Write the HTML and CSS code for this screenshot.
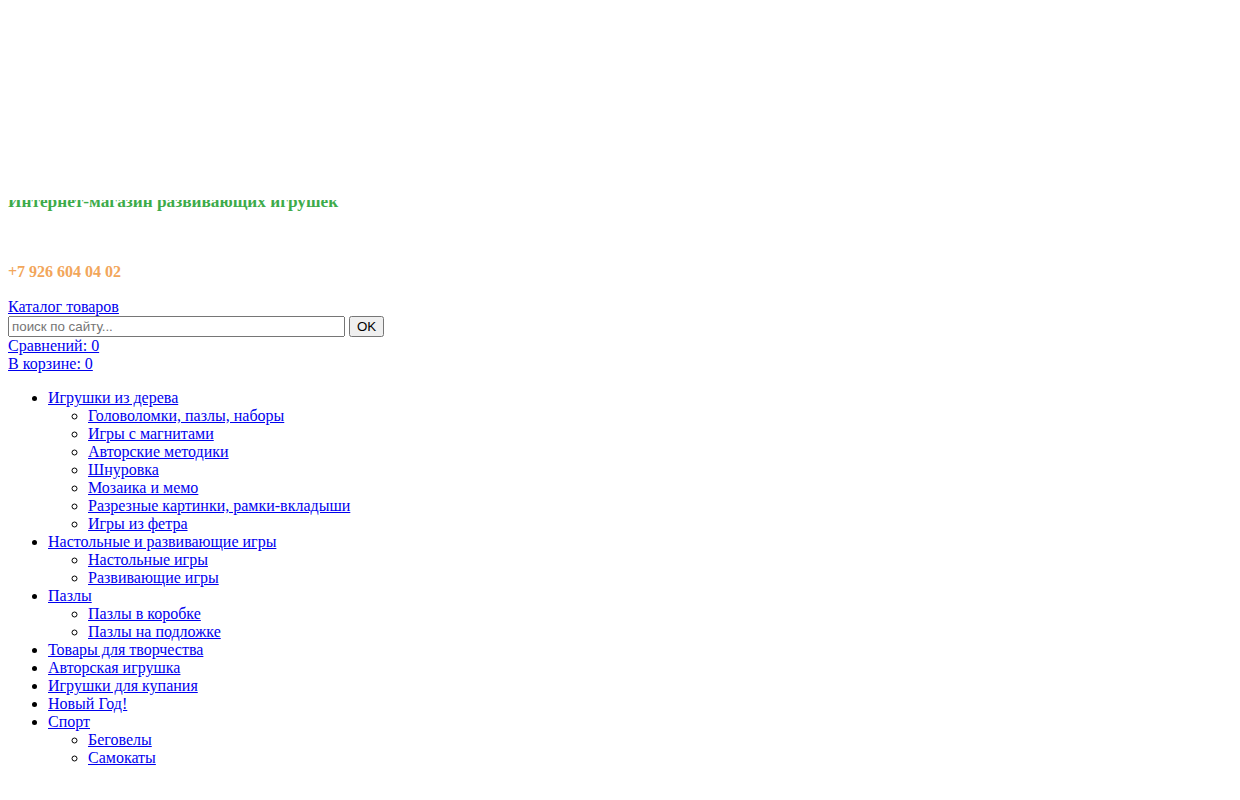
FILE: index.html
```html
<!DOCTYPE html>
<html lang="ru">
<head>
  <meta charset="UTF-8">
  <title>Интернет-магазин развивающих игрушек</title>
  <link rel="stylesheet" href="styles.css">
</head>
<body>

  <header class="header">
    <div class="logo"></div>
    <div class="slogan-clip">
      <div class="slogan">Интернет-магазин развивающих игрушек</div>
    </div>
    <div class="phone">+7 926 604 04 02</div>
  </header>

  <div class="toolbar">
    <a href="#" class="catalog-link">Каталог товаров</a>
    <form class="search" onsubmit="return false;">
      <input type="text" class="search-input" placeholder="поиск по сайту..."> <button type="submit">OK</button>
    </form>
    <a href="#" class="compare-link">Сравнений: 0</a>
    <a href="#" class="cart-link">В корзине: 0</a>
  </div>

  <ul class="menu">
    <li><a href="#">Игрушки из дерева</a>
      <ul>
        <li><a href="#">Головоломки, пазлы, наборы</a></li>
        <li><a href="#">Игры с магнитами</a></li>
        <li><a href="#">Авторские методики</a></li>
        <li><a href="#">Шнуровка</a></li>
        <li><a href="#">Мозаика и мемо</a></li>
        <li><a href="#">Разрезные картинки, рамки-вкладыши</a></li>
        <li><a href="#">Игры из фетра</a></li>
      </ul>
    </li>
    <li><a href="#">Настольные и развивающие игры</a>
      <ul>
        <li><a href="#">Настольные игры</a></li>
        <li><a href="#">Развивающие игры</a></li>
      </ul>
    </li>
    <li><a href="#">Пазлы</a>
      <ul>
        <li><a href="#">Пазлы в коробке</a></li>
        <li><a href="#">Пазлы на подложке</a></li>
      </ul>
    </li>
    <li><a href="#">Товары для творчества</a></li>
    <li><a href="#">Авторская игрушка</a></li>
    <li><a href="#">Игрушки для купания</a></li>
    <li><a href="#">Новый Год!</a></li>
    <li><a href="#">Спорт</a>
      <ul>
        <li><a href="#">Беговелы</a></li>
        <li><a href="#">Самокаты</a></li>
      </ul>
    </li>
  </ul>

</body>
</html>
```

FILE: styles.css
```css
body {
  font-family: "Liberation Serif", "Times New Roman", serif;
  font-size: 16px;
  margin: 8px;
  color: #000;
}

a {
  color: #0000ee;
}

.logo {
  height: 192px;
}

.slogan-clip {
  height: 14px;
  overflow: hidden;
}

.slogan {
  margin-top: -8px;
  font-size: 17.3px;
  line-height: 20px;
  font-weight: bold;
  color: #3dab4a;
}

.phone {
  margin-top: 49px;
  font-size: 16px;
  line-height: 18px;
  font-weight: bold;
  color: #f2a65a;
}

.toolbar {
  margin-top: 17px;
}

.catalog-link,
.compare-link,
.cart-link {
  display: block;
}

.search {
  margin: 0;
}

.search-input {
  width: 337px;
  box-sizing: border-box;
}

.menu {
  margin: 16px 0;
  padding-left: 40px;
}

.menu ul {
  padding-left: 40px;
}
```
